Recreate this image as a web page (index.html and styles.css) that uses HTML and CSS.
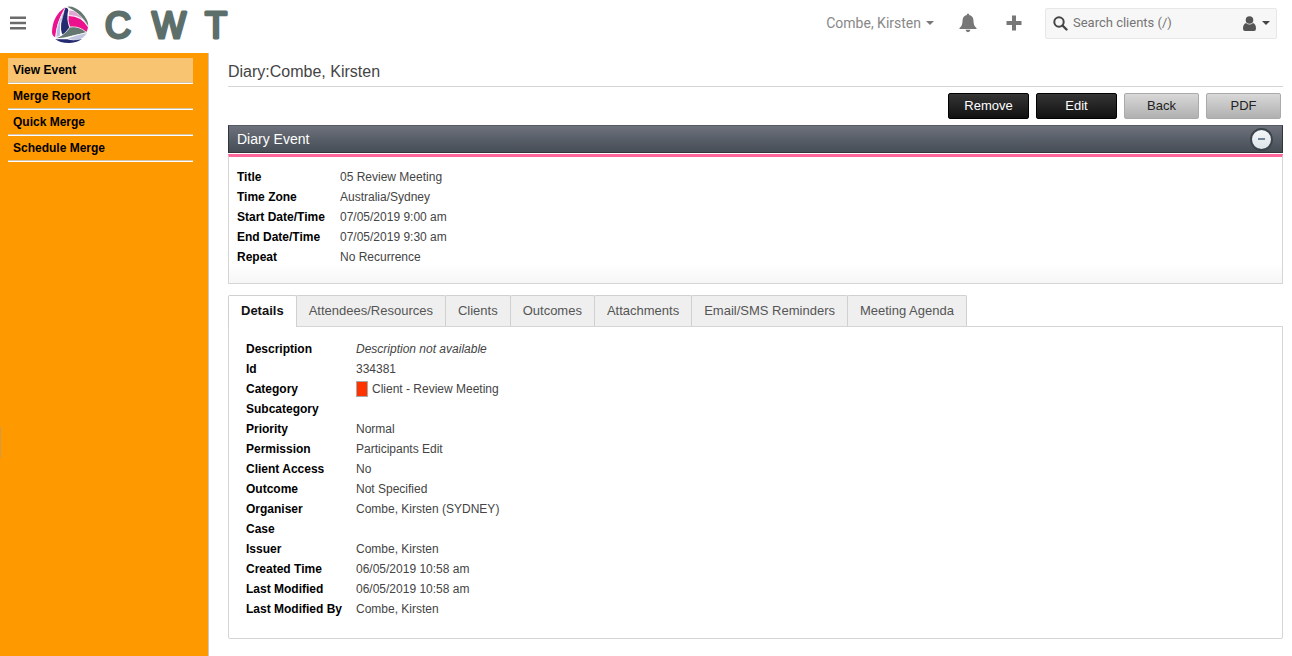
FILE: index.html
```html
<!DOCTYPE html>
<html lang="en">
<head>
<meta charset="utf-8">
<title>Diary Event</title>
<link rel="stylesheet" href="styles.css">
</head>
<body>
<header class="topbar">
  <button class="icon-btn menu-btn" type="button" aria-label="Menu">
    <svg width="18" height="16" viewBox="0 0 18 16"><path d="M1 1.500h16v2.500H1zM1 6.800h16v2.500H1zM1 12.100h16v2.500H1z" fill="#6b6b6b"/></svg>
  </button>
  <a class="brand" href="#" aria-label="CWT home">
    <svg width="182" height="46" viewBox="0 0 182 46">
      <g transform="translate(-11 0) scale(.3333)">
        <path d="M76 22Q38 46 36 96Q36 108 46 112Q48 70 76 22z" fill="#ec118c"/>
        <path d="M68 38Q46 74 49 112L60 107Q58 68 68 38z" fill="#b8bce0"/>
        <path d="M76 24Q60 58 63 88Q64 100 70 107L88 84Q78 54 85 30Q82 22 76 24z" fill="#252b70"/>
        <path d="M88 32Q110 30 126 56Q108 46 87 46z" fill="#e2a6d4"/>
        <path d="M86 48Q124 48 144 82Q143 90 139 96Q120 80 90 80Q83 64 86 48z" fill="#ec118c"/>
        <path d="M82 20Q102 17 124 37Q146 60 145 80Q132 58 116 44Q100 29 82 20z" fill="#647771"/>
        <path d="M48 115Q74 106 90 82Q118 78 140 97Q124 102 100 106Q74 116 48 115z" fill="#647771"/>
        <path d="M84 116Q106 104 141 99Q132 114 114 120Q98 121 84 116z" fill="#c1c5de"/>
        <path d="M46 117Q66 118 82 118Q100 124 126 117Q112 128 90 129Q60 130 46 117z" fill="#252b70"/>
        <path d="M47 112Q50 70 74 26M61 108Q58 72 72 34M50 113Q76 104 88 83M84 25Q120 36 144 78M90 81Q118 77 139 97M50 117Q96 112 138 98" fill="none" stroke="#fff" stroke-width="2"/>
      </g>
      <g class="brand-letters"><text x="54" y="38">C</text><text x="101" y="38">W</text><text x="154" y="38">T</text></g>
    </svg>
  </a>
  <button class="user-btn" type="button">Combe, Kirsten <span class="caret"></span></button>
  <button class="icon-btn bell-btn" type="button" aria-label="Notifications">
    <svg width="18" height="20" viewBox="0 0 18 20"><path d="M9 0.500Q10.300 0.500 10.200 2Q14.500 3 14.500 8Q14.500 13 17.500 15V16H.5V15Q3.500 13 3.500 8Q3.500 3 7.800 2Q7.700.5 9 .5zM6.500 16.800h5q-.5 2.400-2.500 2.400t-2.500-2.400z" fill="#777"/></svg>
  </button>
  <button class="icon-btn plus-btn" type="button" aria-label="Add">
    <svg width="16" height="16" viewBox="0 0 16 16"><path d="M6 .5h4V6h5.500v4H10v5.500H6V10H.5V6H6z" fill="#777"/></svg>
  </button>
  <div class="search">
    <svg width="15" height="15" viewBox="0 0 15 15"><circle cx="6" cy="6" r="4.700" fill="none" stroke="#444" stroke-width="2"/><path d="M9.500 9.500l4 4" stroke="#444" stroke-width="2.400" stroke-linecap="round"/></svg>
    <input class="search-input" type="text" placeholder="Search clients (/)" aria-label="Search clients">
    <button class="icon-btn scope-btn" type="button" aria-label="Search scope">
      <svg width="13" height="15" viewBox="0 0 13 15"><circle cx="6.500" cy="4" r="3.800" fill="#555"/><path d="M3 7Q6.500 10 10 7Q13 8 13 12.500Q13 15 11 15H2Q0 15 0 12.500Q0 8 3 7z" fill="#555"/></svg>
      <span class="caret caret-dark"></span>
    </button>
  </div>
</header>
<div class="layout">
  <nav class="sidebar">
    <a class="side-link active" href="#">View Event</a>
    <a class="side-link" href="#">Merge Report</a>
    <a class="side-link" href="#">Quick Merge</a>
    <a class="side-link" href="#">Schedule Merge</a>
    <span class="edge-handle"></span>
  </nav>
  <main class="content">
    <h1 class="page-title">Diary:Combe, Kirsten</h1>
    <div class="actions">
      <button class="btn btn-dark" type="button">Remove</button>
      <button class="btn btn-dark" type="button">Edit</button>
      <button class="btn btn-light" type="button">Back</button>
      <button class="btn btn-light" type="button">PDF</button>
    </div>
    <section class="panel">
      <div class="panel-head">
        <h2 class="panel-title">Diary Event</h2>
        <button class="collapse" type="button" aria-label="Collapse"><span class="minus"></span></button>
      </div>
      <dl class="fields summary">
        <dt>Title</dt><dd>05 Review Meeting</dd>
        <dt>Time Zone</dt><dd>Australia/Sydney</dd>
        <dt>Start Date/Time</dt><dd>07/05/2019 9:00 am</dd>
        <dt>End Date/Time</dt><dd>07/05/2019 9:30 am</dd>
        <dt>Repeat</dt><dd>No Recurrence</dd>
      </dl>
    </section>
    <div class="tabs" role="tablist">
      <button class="tab selected" type="button" role="tab" aria-selected="true">Details</button>
      <button class="tab" type="button" role="tab">Attendees/Resources</button>
      <button class="tab" type="button" role="tab">Clients</button>
      <button class="tab" type="button" role="tab">Outcomes</button>
      <button class="tab" type="button" role="tab">Attachments</button>
      <button class="tab" type="button" role="tab">Email/SMS Reminders</button>
      <button class="tab" type="button" role="tab">Meeting Agenda</button>
    </div>
    <dl class="fields details">
      <dt>Description</dt><dd><em>Description not available</em></dd>
      <dt>Id</dt><dd>334381</dd>
      <dt>Category</dt><dd class="category"><span class="swatch"></span>Client - Review Meeting</dd>
      <dt>Subcategory</dt><dd></dd>
      <dt>Priority</dt><dd>Normal</dd>
      <dt>Permission</dt><dd>Participants Edit</dd>
      <dt>Client Access</dt><dd>No</dd>
      <dt>Outcome</dt><dd>Not Specified</dd>
      <dt>Organiser</dt><dd>Combe, Kirsten (SYDNEY)</dd>
      <dt>Case</dt><dd></dd>
      <dt>Issuer</dt><dd>Combe, Kirsten</dd>
      <dt>Created Time</dt><dd>06/05/2019 10:58 am</dd>
      <dt>Last Modified</dt><dd>06/05/2019 10:58 am</dd>
      <dt>Last Modified By</dt><dd>Combe, Kirsten</dd>
    </dl>
  </main>
</div>
</body>
</html>
```

FILE: styles.css
```css
* { box-sizing: border-box; }
body {
  margin: 0;
  min-height: 100vh;
  display: flex;
  flex-direction: column;
  background: #fff;
  color: #444;
  font: 12px/20px "Liberation Sans", Arial, sans-serif;
}
button { font: inherit; color: inherit; cursor: pointer; }
a { color: inherit; text-decoration: none; }
svg { display: block; flex: none; }

.topbar {
  display: flex;
  align-items: center;
  padding: 0 15px 7px 9px;
  height: 53px;
  font-family: Roboto, sans-serif;
}
.icon-btn { border: 0; padding: 0; background: none; }
.menu-btn { margin-right: 24px; }
.brand { margin-right: auto; }
.brand-letters {
  font: 400 36px "Liberation Sans", Arial, sans-serif;
  fill: #5d6f6b;
  stroke: #5d6f6b;
  stroke-width: 3px;
  stroke-linejoin: round;
}
.user-btn {
  display: flex;
  align-items: center;
  gap: 5px;
  border: 0;
  padding: 0;
  background: none;
  color: #888;
  font-size: 14px;
}
.caret {
  border: 4px solid transparent;
  border-top-color: #777;
  border-bottom: 0;
}
.caret-dark { border-top-color: #444; }
.bell-btn { margin-left: 25px; }
.plus-btn { margin: 0 23px 0 29px; }
.search {
  display: flex;
  align-items: center;
  width: 232px;
  height: 31px;
  padding: 0 6px 0 7px;
  border: 1px solid #e7e7e7;
  border-radius: 2px;
  background: #f7f7f7;
}
.search-input {
  flex: 1;
  min-width: 0;
  border: 0;
  padding: 0 5px;
  background: none;
  font: 13px/20px Roboto, sans-serif;
}
.search-input::placeholder { color: #757575; }
.scope-btn { display: flex; align-items: center; gap: 6px; }

.layout { display: flex; flex: 1; }
.sidebar {
  position: relative;
  flex: none;
  width: 209px;
  padding: 5px 15px 0 8px;
  background: #ff9900;
  border-right: 1px solid #c8c8c8;
}
.edge-handle {
  position: absolute;
  left: 0;
  top: 62%;
  width: 1px;
  height: 31px;
  background: #d29a45;
}
.side-link {
  display: block;
  height: 26px;
  padding: 2px 5px;
  border-bottom: 1px solid #fff;
  box-shadow: inset 0 -1px #d5c3a8;
  color: #000;
  font-weight: 700;
}
.side-link.active { background: #f8c471; }

.content { flex: 1; min-width: 0; padding: 7px 9px 17px 19px; }
.page-title {
  margin: 0;
  height: 27px;
  border-bottom: 1px solid #d5d5d5;
  color: #444;
  font: 400 16px/24px "Liberation Sans", Arial, sans-serif;
}
.actions {
  display: flex;
  justify-content: flex-end;
  gap: 7px;
  padding: 6px 2px 6px 0;
}
.btn {
  height: 26px;
  padding: 0;
  border-radius: 2px;
  font: 400 13px/24px "Liberation Sans", Arial, sans-serif;
}
.btn-dark {
  width: 81px;
  border: 1px solid #000;
  background: linear-gradient(#353535, #111);
  color: #fff;
}
.btn-light {
  width: 75px;
  border: 1px solid #aaa;
  background: linear-gradient(#d8d8d8, #b0b0b0);
  color: #222;
}
.panel-head {
  display: flex;
  align-items: center;
  justify-content: space-between;
  height: 28px;
  padding: 0 9px 0 8px;
  border: 1px solid #30363b;
  border-top-color: #555a62;
  background: linear-gradient(#6d717b, #454d55);
}
.panel-title {
  margin: 0;
  color: #fff;
  font: 400 14px/20px "Liberation Sans", Arial, sans-serif;
}
.collapse {
  display: grid;
  place-items: center;
  width: 23px;
  height: 23px;
  padding: 0;
  border: 2px solid #3b434b;
  border-radius: 50%;
  background: linear-gradient(#f4f7f9, #dde3e8);
}
.minus { width: 7px; height: 2px; background: #718596; }
.fields { display: grid; margin: 0; }
.fields dt { color: #000; font-weight: 700; }
.fields dd { margin: 0; }
.summary {
  grid-template-columns: 103px 1fr;
  margin-top: 1px;
  padding: 10px 8px 16px;
  border: 1px solid #d5d5d5;
  border-top: 3px solid #ff6699;
  background: linear-gradient(#fff 85%, #f6f6f6);
}
.tabs { display: flex; margin-top: 11px; }
.tab {
  height: 31px;
  margin-right: -1px;
  padding: 0 12px;
  border: 1px solid #d0d0d0;
  border-bottom: 0;
  border-radius: 2px 2px 0 0;
  background: #efefef;
  color: #555;
  font: 13px/30px "Liberation Sans", Arial, sans-serif;
}
.tab.selected {
  position: relative;
  height: 32px;
  margin-bottom: -1px;
  padding-bottom: 2px;
  background: #fff;
  color: #111;
  font-weight: 700;
}
.details {
  grid-template-columns: 110px 1fr;
  grid-auto-rows: 20px;
  padding: 12px 17px 19px;
  border: 1px solid #d5d5d5;
  border-radius: 0 0 2px 2px;
}
.category { display: flex; align-items: center; gap: 4px; }
.swatch {
  width: 12px;
  height: 16px;
  border: 1px solid #aaa;
  background: #ff3300;
}
```
